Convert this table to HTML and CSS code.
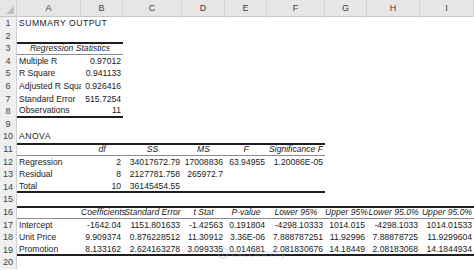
FILE: index.html
```html
<!DOCTYPE html>
<html>
<head>
<meta charset="utf-8">
<link rel="stylesheet" href="styles.css">
</head>
<body>
<div class="sheet">
  <div class="row head">
    <div class="corner"><svg width="8" height="8" viewBox="0 0 8 8"><polygon points="8,0 8,8 0,8" fill="#bdbdbd"/></svg></div>
    <div class="col">A</div><div class="col">B</div><div class="col">C</div><div class="col">D</div><div class="col">E</div><div class="col">F</div><div class="col">G</div><div class="col">H</div><div class="col">I</div>
  </div>

  <div class="row"><div class="n">1</div><div class="c over caps">SUMMARY OUTPUT</div><div class="c"></div><div class="c"></div><div class="c"></div><div class="c"></div><div class="c"></div><div class="c"></div><div class="c"></div><div class="c"></div></div>
  <div class="row"><div class="n">2</div><div class="c"></div><div class="c"></div><div class="c"></div><div class="c"></div><div class="c"></div><div class="c"></div><div class="c"></div><div class="c"></div><div class="c"></div></div>
  <div class="row"><div class="n">3</div><div class="c span2 it bt bb">Regression Statistics</div><div class="c"></div><div class="c"></div><div class="c"></div><div class="c"></div><div class="c"></div><div class="c"></div><div class="c"></div></div>
  <div class="row"><div class="n">4</div><div class="c">Multiple R</div><div class="c num">0.97012</div><div class="c"></div><div class="c"></div><div class="c"></div><div class="c"></div><div class="c"></div><div class="c"></div><div class="c"></div></div>
  <div class="row"><div class="n">5</div><div class="c">R Square</div><div class="c num">0.941133</div><div class="c"></div><div class="c"></div><div class="c"></div><div class="c"></div><div class="c"></div><div class="c"></div><div class="c"></div></div>
  <div class="row"><div class="n">6</div><div class="c">Adjusted R Square</div><div class="c num">0.926416</div><div class="c"></div><div class="c"></div><div class="c"></div><div class="c"></div><div class="c"></div><div class="c"></div><div class="c"></div></div>
  <div class="row"><div class="n">7</div><div class="c">Standard Error</div><div class="c num">515.7254</div><div class="c"></div><div class="c"></div><div class="c"></div><div class="c"></div><div class="c"></div><div class="c"></div><div class="c"></div></div>
  <div class="row"><div class="n">8</div><div class="c bk">Observations</div><div class="c num bk">11</div><div class="c"></div><div class="c"></div><div class="c"></div><div class="c"></div><div class="c"></div><div class="c"></div><div class="c"></div></div>
  <div class="row"><div class="n">9</div><div class="c"></div><div class="c"></div><div class="c"></div><div class="c"></div><div class="c"></div><div class="c"></div><div class="c"></div><div class="c"></div><div class="c"></div></div>
  <div class="row"><div class="n">10</div><div class="c caps">ANOVA</div><div class="c"></div><div class="c"></div><div class="c"></div><div class="c"></div><div class="c"></div><div class="c"></div><div class="c"></div><div class="c"></div></div>
  <div class="row"><div class="n">11</div><div class="c bt bb"></div><div class="c it bt bb">df</div><div class="c it bt bb">SS</div><div class="c it bt bb">MS</div><div class="c it bt bb">F</div><div class="c it bt bb">Significance F</div><div class="c"></div><div class="c"></div><div class="c"></div></div>
  <div class="row"><div class="n">12</div><div class="c">Regression</div><div class="c num">2</div><div class="c num">34017672.79</div><div class="c num">17008836</div><div class="c num">63.94955</div><div class="c num">1.20086E-05</div><div class="c"></div><div class="c"></div><div class="c"></div></div>
  <div class="row"><div class="n">13</div><div class="c">Residual</div><div class="c num">8</div><div class="c num">2127781.758</div><div class="c num">265972.7</div><div class="c"></div><div class="c"></div><div class="c"></div><div class="c"></div><div class="c"></div></div>
  <div class="row"><div class="n">14</div><div class="c bk">Total</div><div class="c num bk">10</div><div class="c num bk">36145454.55</div><div class="c bk"></div><div class="c bk"></div><div class="c bk"></div><div class="c"></div><div class="c"></div><div class="c"></div></div>
  <div class="row"><div class="n">15</div><div class="c"></div><div class="c"></div><div class="c"></div><div class="c"></div><div class="c"></div><div class="c"></div><div class="c"></div><div class="c"></div><div class="c"></div></div>
  <div class="row"><div class="n">16</div><div class="c bt bb"></div><div class="c it bt bb">Coefficients</div><div class="c it bt bb">Standard Error</div><div class="c it bt bb">t Stat</div><div class="c it bt bb">P-value</div><div class="c it bt bb">Lower 95%</div><div class="c it bt bb">Upper 95%</div><div class="c it bt bb">Lower 95.0%</div><div class="c it bt bb">Upper 95.0%</div></div>
  <div class="row"><div class="n">17</div><div class="c">Intercept</div><div class="c num">-1642.04</div><div class="c num">1151.801633</div><div class="c num">-1.42563</div><div class="c num">0.191804</div><div class="c num">-4298.10333</div><div class="c num">1014.015</div><div class="c num">-4298.1033</div><div class="c num">1014.01533</div></div>
  <div class="row"><div class="n">18</div><div class="c">Unit Price</div><div class="c num">9.909374</div><div class="c num">0.876228512</div><div class="c num">11.30912</div><div class="c num">3.36E-06</div><div class="c num">7.888787251</div><div class="c num">11.92996</div><div class="c num">7.88878725</div><div class="c num">11.9299604</div></div>
  <div class="row"><div class="n">19</div><div class="c bk">Promotion</div><div class="c num bk">8.133162</div><div class="c num bk">2.624163278</div><div class="c num bk">3.099335</div><div class="c num bk">0.014681</div><div class="c num bk">2.081830676</div><div class="c num bk">14.18449</div><div class="c num bk">2.08183068</div><div class="c num bk">14.1844934</div></div>
  <div class="row"><div class="n">20</div><div class="c"></div><div class="c"></div><div class="c"></div><div class="c"></div><div class="c"></div><div class="c"></div><div class="c"></div><div class="c"></div><div class="c"></div></div>

  <div class="mark">
    <svg width="12" height="12" viewBox="0 0 12 12"><circle cx="6" cy="6" r="5" fill="none" stroke="#8fa9c8" stroke-width="1.5"/><path d="M3.6 6h4.8M6 3.6v4.8" stroke="#8fa9c8" stroke-width="1.3"/></svg>
    <span class="mark-text">exceldemy</span>
  </div>
</div>
</body>
</html>
```

FILE: styles.css
```css
html, body {
  margin: 0;
  padding: 0;
  background: #ffffff;
}

.sheet {
  position: relative;
  width: 474px;
  height: 270px;
  overflow: hidden;
  font-family: "Liberation Sans", Arial, sans-serif;
  font-size: 8.6px;
  color: #1a1a1a;
}

.row {
  display: grid;
  grid-template-columns: 17px 64px 42px 59px 43px 42px 58px 42px 53px 54px;
  height: 12.6px;
  line-height: 12.6px;
}

.row.head {
  height: 17px;
  line-height: 17px;
  background: #e6e6e6;
  border-bottom: 1px solid #c6c6c6;
  box-sizing: border-box;
  color: #404040;
  font-size: 9px;
}

.corner {
  display: flex;
  align-items: flex-end;
  justify-content: flex-end;
  padding: 0 2px 3px 0;
  border-right: 1px solid #cfcfcf;
}

.col {
  text-align: center;
  border-right: 1px solid #d3d3d3;
}

.n {
  background: #efefef;
  border-right: 1px solid #cfcfcf;
  text-align: center;
  color: #404040;
  font-size: 9px;
}

.c {
  box-sizing: border-box;
  padding: 0 2px;
  white-space: nowrap;
  overflow: hidden;
}

.c.over {
  overflow: visible;
}

.caps {
  letter-spacing: 0.5px;
}

.span2 {
  grid-column: span 2;
}

.num {
  text-align: right;
}

.it {
  font-style: italic;
  text-align: center;
  overflow: visible;
  padding: 0;
}

.bt {
  border-top: 2px solid #1e1e1e;
  line-height: 10px;
}

.bb {
  border-bottom: 1px solid #8a8a8a;
}

.bt.bb {
  line-height: 9.6px;
}

.bk {
  border-bottom: 2px solid #1e1e1e;
  line-height: 11px;
}

.mark {
  position: absolute;
  left: 217px;
  top: 245px;
  display: flex;
  align-items: center;
  gap: 2px;
  opacity: 0.35;
}

.mark-text {
  font-family: "Open Sans", sans-serif;
  font-size: 11px;
  color: #9fb6d2;
}
```
